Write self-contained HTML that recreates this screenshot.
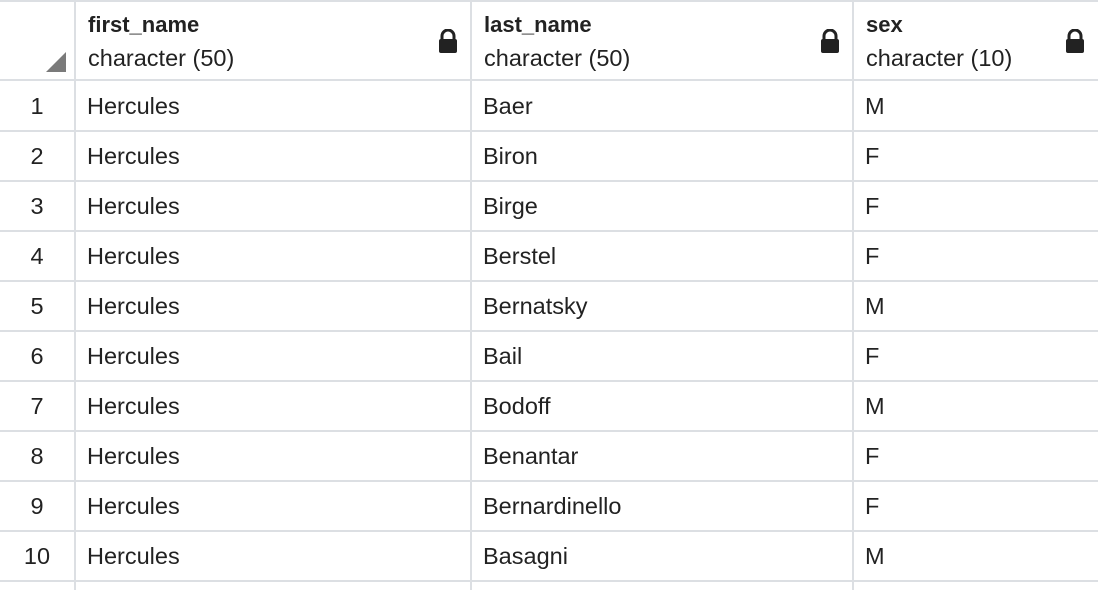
<!DOCTYPE html>
<html><head><style>
body{margin:0;width:1098px;height:596px;background:#fff;overflow:hidden;position:relative;font-family:"Liberation Sans",Arial,sans-serif;color:#222}
.h{position:absolute;background:#dcdfe3;height:2px;left:0;width:1098px}
.v{position:absolute;background:#dcdfe3;width:2px;top:0;height:590px}
.t{position:absolute;font-size:23.5px;line-height:26px;white-space:nowrap}
.b{font-weight:bold;font-size:22px}
.lock{position:absolute;width:22px;height:24px}
</style></head><body>
<div class="h" style="top:0"></div>
<div class="h" style="top:79px"></div>
<div class="v" style="left:74px"></div>
<div class="v" style="left:470px"></div>
<div class="v" style="left:852px"></div>
<svg style="position:absolute;left:46px;top:52px" width="20" height="20"><polygon points="20,0 20,20 0,20" fill="#7a7a7a"/></svg>

<div class="t b" style="left:88px;top:12px">first_name</div>
<div class="t" style="left:88px;top:45px">character (50)</div>
<div class="t b" style="left:484px;top:12px">last_name</div>
<div class="t" style="left:484px;top:45px">character (50)</div>
<div class="t b" style="left:866px;top:12px">sex</div>
<div class="t" style="left:866px;top:45px">character (10)</div>

<svg class="lock" style="left:437px;top:29px" viewBox="0 0 22 24"><path d="M5 11V7a6 6 0 0 1 12 0v4" fill="none" stroke="#222" stroke-width="3"/><rect x="2" y="10" width="18" height="14" rx="2" fill="#222"/></svg>
<svg class="lock" style="left:819px;top:29px" viewBox="0 0 22 24"><path d="M5 11V7a6 6 0 0 1 12 0v4" fill="none" stroke="#222" stroke-width="3"/><rect x="2" y="10" width="18" height="14" rx="2" fill="#222"/></svg>
<svg class="lock" style="left:1064px;top:29px" viewBox="0 0 22 24"><path d="M5 11V7a6 6 0 0 1 12 0v4" fill="none" stroke="#222" stroke-width="3"/><rect x="2" y="10" width="18" height="14" rx="2" fill="#222"/></svg>

<div id="rows"></div>
<script>
var d=[["Baer","M"],["Biron","F"],["Birge","F"],["Berstel","F"],["Bernatsky","M"],["Bail","F"],["Bodoff","M"],["Benantar","F"],["Bernardinello","F"],["Basagni","M"]];
var h="";
d.forEach(function(r,i){
 var y=81+i*50;
 h+='<div class="h" style="top:'+(y+49)+'px"></div>';
 var ty=y+12;
 h+='<div class="t" style="left:0;width:74px;text-align:center;top:'+ty+'px">'+(i+1)+'</div>';
 h+='<div class="t" style="left:87px;top:'+ty+'px">Hercules</div>';
 h+='<div class="t" style="left:483px;top:'+ty+'px">'+r[0]+'</div>';
 h+='<div class="t" style="left:865px;top:'+ty+'px">'+r[1]+'</div>';
});
document.getElementById("rows").innerHTML=h;
</script>
</body></html>
